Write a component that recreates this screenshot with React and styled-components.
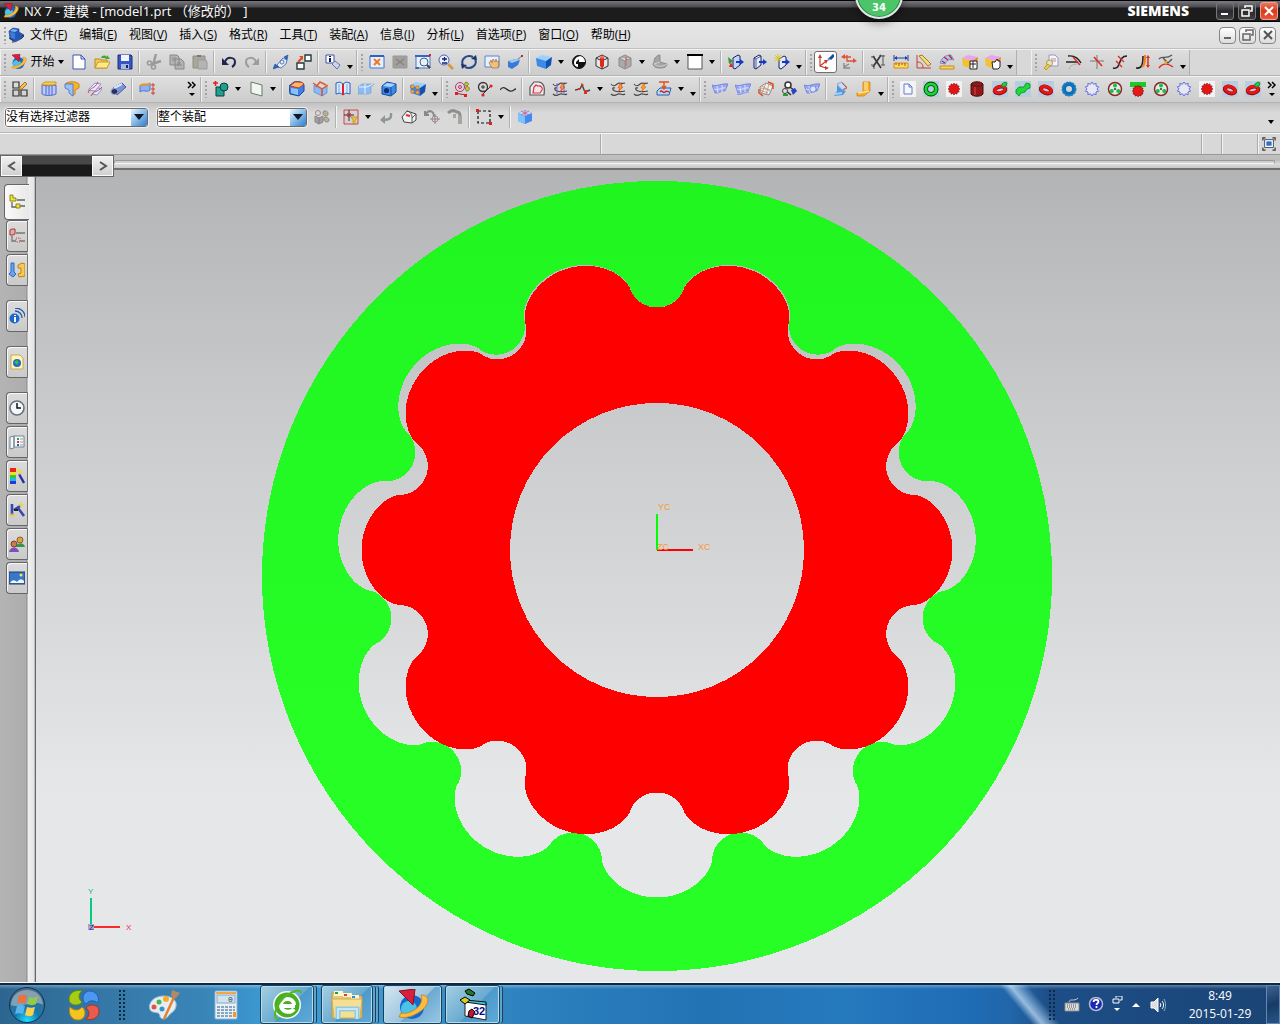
import React from "react";
import styled, { createGlobalStyle, css } from "styled-components";

const GlobalStyle = createGlobalStyle`
  * { box-sizing: border-box; }
  body { margin: 0; background: #b0b0b0; }
  button, select { font: inherit; color: inherit; }
`;

const uiFont = `"Open Sans", "Noto Sans CJK SC", sans-serif`;

const Window = styled.div`
  display: flex;
  flex-direction: column;
  height: 100vh;
  overflow: hidden;
  font-family: ${uiFont};
  font-size: 12px;
  line-height: 16px;
  color: #000;
`;

const PlainButton = styled.button`
  display: flex;
  align-items: center;
  justify-content: center;
  padding: 0;
  border: 0;
  background: none;
`;

/* ---------- title bar ---------- */

const TitleBar = styled.header`
  position: relative;
  display: flex;
  align-items: center;
  flex: none;
  height: 22px;
  padding: 0 2px 0 3px;
  border-top: 1px solid #000;
  border-bottom: 1px solid #000;
  background: linear-gradient(#77767c 0, #4b4a50 6px, #1c1c1c 7px, #1c1c1c 100%);
  color: #fff;
`;

const Title = styled.h1`
  flex: 1;
  margin: 0 0 0 5px;
  font-size: 13px;
  font-weight: 400;
  white-space: pre;
`;

const Brand = styled.span`
  margin-right: 27px;
  font-size: 14px;
  font-weight: 800;
`;

const WindowButtons = styled.div`
  display: flex;
  gap: ${(p) => (p.$mdi ? 3 : 4)}px;
`;

const WindowButton = styled(PlainButton)`
  width: 18px;
  height: 18px;
  border: 1px solid ${(p) => (p.$close ? "#f0a090" : "#77777c")};
  border-radius: 3px;
  background: ${(p) =>
    p.$close
      ? "linear-gradient(#e8785c, #d83a1c 50%, #e8583a)"
      : "linear-gradient(#6c6b70, #2a2a2c 50%, #3c3c3e)"};
`;

const MdiButton = styled(PlainButton)`
  width: 17px;
  height: 17px;
  border: 1px solid #858585;
  border-radius: 4px;
  background: linear-gradient(#fff, #dcdcdc);
`;

const Badge = styled.div`
  position: absolute;
  z-index: 2;
  top: -30px;
  left: calc(68.75% - 25px);
  width: 48px;
  height: 48px;
  padding-top: 27px;
  border: 2px solid #e4e4e4;
  border-radius: 50%;
  background: #4cc468;
  box-shadow: 0 4px 8px rgba(0, 0, 0, 0.4), inset 0 0 0 1px #2c8a50;
  font: 700 10px/16px "DejaVu Sans", sans-serif;
  text-align: center;
`;

/* ---------- menus and tool bars ---------- */

const MenuBar = styled.nav`
  display: flex;
  align-items: center;
  flex: none;
  height: 27px;
  padding: 0 4px 0 0;
  border-bottom: 1px solid #c0c0c0;
  background: linear-gradient(#e6e6e6, #dedede);
`;

const MenuList = styled.div`
  display: flex;
  flex: 1;
  gap: 12px;
  margin-left: 6px;
  white-space: nowrap;
`;

const Grip = styled.span`
  flex: none;
  width: 8px;
  height: 18px;
  background: radial-gradient(circle, #a4a4a4 1px, transparent 1px) 3px 0 / 4px 4px repeat-y;
`;

const ToolRow = styled.div`
  display: flex;
  flex: none;
  height: 27px;
  border-top: 1px solid #f2f2f2;
  border-bottom: 1px solid #b4b4b4;
  background: #d8d8d8;
`;

const ToolGroup = styled.div`
  display: flex;
  align-items: center;
  flex: none;
  margin-left: ${(p) => p.$gap || 0}px;
  padding-bottom: 2px;
  border-right: 1px solid #b0b0b0;
  background: linear-gradient(#dedede, #cccccc);
  box-shadow: inset 1px 0 #f0f0f0;
`;

const ToolButton = styled(PlainButton)`
  flex: none;
  width: 23px;
  height: 22px;
  ${(p) =>
    p.$active &&
    css`
      border: 1px solid #6f6f6f;
      border-radius: 3px;
      background: #fff;
    `}
`;

const StartButton = styled(PlainButton)`
  width: 59px;
  height: 22px;
  gap: 3px;
`;

const Divider = styled.span`
  flex: none;
  width: 2px;
  height: 22px;
  margin: 0 2px;
  border-left: 1px solid #b2b2b2;
  background: #f4f4f4;
`;

const DropButton = styled(PlainButton)`
  flex: none;
  width: 12px;
  height: 22px;
  padding-top: ${(p) => (p.$low ? 10 : 0)}px;
`;

const MoreButton = styled(PlainButton)`
  width: 16px;
  height: 22px;
  margin-left: ${(p) => p.$space || 0}px;
`;

const SelectionBar = styled.div`
  display: flex;
  align-items: center;
  flex: none;
  height: 30px;
  padding: 0 3px 1px 5px;
  border-bottom: 1px solid #b8b8b8;
  background: linear-gradient(#c2c2c2, #d9d9d9 10px);
`;

const FilterBox = styled.div`
  display: flex;
  flex: none;
  align-items: center;
  width: ${(p) => p.$width}px;
  height: 19px;
  margin-right: ${(p) => p.$after}px;
  border: 1px solid #6a6a6a;
  border-radius: 3px;
  background: #fff;
  box-shadow: 0 0 0 1px #ececec;
  overflow: hidden;
`;

const Filter = styled.select`
  flex: 1;
  align-self: stretch;
  min-width: 0;
  padding: 0;
  border: 0;
  outline: 0;
  appearance: none;
  background: #fff;
  font-size: 12px;
  line-height: 16px;
`;

const FilterArrow = styled.span`
  display: flex;
  align-items: center;
  justify-content: center;
  width: 16px;
  align-self: stretch;
  background: linear-gradient(135deg, #ecf6fd, #8fc1ec 45%, #2f7dcc);
  pointer-events: none;
`;

const Spacer = styled.span`
  flex: 1;
`;

const StatusBar = styled.div`
  display: flex;
  flex: none;
  height: 22px;
  border-top: 1px solid #f6f6f6;
  border-bottom: 1px solid #999;
  background: #d8d8d8;
`;

const StatusCell = styled.div`
  display: flex;
  align-items: center;
  justify-content: center;
  flex: ${(p) => p.$flex || "none"};
  width: ${(p) => (p.$width ? `${p.$width}px` : "auto")};
  border-right: 1px solid ${(p) => (p.$last ? "transparent" : "#aaa")};
  box-shadow: ${(p) => (p.$last ? "none" : "1px 0 #f2f2f2")};
`;

const CueRow = styled.div`
  position: relative;
  z-index: 1;
  flex: none;
  height: 15px;
  padding: 5px 5px 0 114px;
  border-bottom: 2px solid #707070;
  background: linear-gradient(#c0c0c0, #bcbcbc 5px, #dcdcdc 9px, #c8c8c8);
`;

const Groove = styled.div`
  height: 4px;
  border: 1px solid #999;
  border-bottom-color: #f4f4f4;
  border-radius: 2px;
  background: #d0d0d0;
`;

const PageStrip = styled.div`
  position: absolute;
  top: 0;
  left: 0;
  display: flex;
  width: 114px;
  height: 22px;
  border: 1px solid #666;
  background: linear-gradient(#48484a 8px, #1a1a1a 9px);
`;

const PageButton = styled(PlainButton)`
  width: 21px;
  background: linear-gradient(#f2f2f2, #cfcfcf);
  box-shadow: inset 0 0 0 1px #fafafa;
  & + & { margin-left: auto; }
`;

/* ---------- work area ---------- */

const WorkArea = styled.main`
  display: flex;
  flex: 1;
  min-height: 0;
  border-bottom: 1px solid #f8f8f8;
`;

const ResourceBar = styled.aside`
  display: flex;
  flex-direction: column;
  align-items: flex-end;
  gap: 2px;
  flex: none;
  width: 36px;
  padding: 14px 0 0 4px;
  border-right: 1px solid #666;
  background: linear-gradient(90deg, #b4b4b4, #adadad 26px, #888 27px, #f0f0f0 28px, #e4e4e4 34px, #999 35px);
`;

const ResourceTab = styled(PlainButton)`
  flex: none;
  width: ${(p) => (p.$active ? 25 : 22)}px;
  height: ${(p) => (p.$active ? 36 : 32)}px;
  margin: ${(p) => p.$space || 0}px ${(p) => (p.$active ? 6 : 7)}px 0 0;
  border: 1px solid #666;
  border-right: ${(p) => (p.$active ? "0" : "1px solid #777")};
  border-radius: 4px 0 0 4px;
  background: ${(p) =>
    p.$active ? "linear-gradient(90deg, #fafafa, #e8e8e8)" : "linear-gradient(#dcdcdc, #cacaca)"};
  box-shadow: inset 1px 1px #f8f8f8;
`;

const Viewport = styled.section`
  position: relative;
  flex: 1;
  min-width: 0;
  background: linear-gradient(#b3b4b6 0%, #cbccce 32%, #dadbdd 58%, #e6e7e9 77%);
`;

const Model = styled.svg`
  display: block;
  width: 100%;
  height: 100%;
`;

const Triad = styled.svg`
  position: absolute;
  left: 46px;
  bottom: 46px;
`;

/* ---------- task bar ---------- */

const TaskBar = styled.footer`
  display: flex;
  align-items: stretch;
  flex: none;
  height: 41px;
  border-top: 2px solid #0c2a48;
  background:
    linear-gradient(rgba(255, 255, 255, 0.3), rgba(255, 255, 255, 0) 4px),
    linear-gradient(50deg, transparent 78.6%, rgba(190, 220, 245, 0.75) 79.4%, transparent 80.8%),
    linear-gradient(90deg, #2c6690 0, #3577a6 8%, #3985b8 16%, #3c9bd4 21%, #3f97ce 30%, #2c80bd 42%, #2273b4 55%, #2579bd 66%, #1f6cb5 76%, #2166a8 79%, #1d4e87 82%, #1a4475 100%);
  color: #fff;
`;

const TaskLaunch = styled(PlainButton)`
  width: ${(p) => p.$width}px;
  margin-right: ${(p) => p.$after || 0}px;
`;

const TaskButton = styled(PlainButton)`
  width: ${(p) => p.$width}px;
  margin-right: ${(p) => p.$after}px;
  border: 1px solid #19405f;
  border-radius: 3px;
  background: ${(p) =>
    p.$active
      ? "linear-gradient(135deg, #d5e7f2, #9cc4de 55%, #6ba9d2 56%, #98c8e4)"
      : "linear-gradient(135deg, #a5cfe4, #68aacf 55%, #4c9acb 56%, #60aada)"};
  box-shadow: inset 0 0 0 1px #b8dbea${(p) =>
    p.$stack > 0 ? ", 3px 0 0 -1px #60a4cb, 4px 0 0 -1px #19405f" : ""}${(p) =>
    p.$stack > 1 ? ", 6px 0 0 -1px #60a4cb, 7px 0 0 -1px #19405f" : ""};
`;

const BandGrip = styled.span`
  flex: none;
  align-self: stretch;
  width: 8px;
  margin: 4px 0;
  background: radial-gradient(circle, #0f2b44 1px, transparent 1px) 0 0 / 4px 4px;
`;

const Tray = styled.div`
  display: flex;
  align-items: center;
  margin-left: auto;
`;

const TrayButton = styled(PlainButton)`
  width: ${(p) => p.$width}px;
  height: 28px;
`;

const Clock = styled.time`
  width: 92px;
  font-size: 12px;
  line-height: 18px;
  text-align: center;
`;

const ShowDesktop = styled(PlainButton)`
  align-self: stretch;
  width: 14px;
  border: 1px solid #6287b0;
  background: linear-gradient(160deg, #3e6490, #173b66 50%, #2a5488);
`;

/* ---------- icons ---------- */

const Svg = ({ children, size = 16, box = 16 }) => (
  <svg width={size} height={size} viewBox={`0 0 ${box} ${box}`} fill="none" strokeWidth="1" aria-hidden="true">
    {children}
  </svg>
);

const P = ({ d, f = "none", s, w }) => <path d={d} fill={f} stroke={s} strokeWidth={w} />;

const Cube = ({ a = "#9cd0ff", b = "#3b8ae8", c = "#1450b0" }) => (
  <>
    <P d="M0 4 6 1l10 2-6 4z" f={a} />
    <P d="M0 4l10 3v8l-9-3z" f={b} />
    <P d="M10 7l6-4-1 8-5 4z" f={c} />
  </>
);

const WireCube = ({ line = "#333", fill = "#e6e6e6" }) => (
  <P d="M8 1l6 3v8l-6 3-6-3V4zM2 4l6 3 6-3M8 7v8" f={fill} s={line} />
);

const Orb = () => (
  <>
    <circle cx="7.5" cy="9" r="6" fill="#1668cc" />
    <circle cx="6" cy="10" r="4" fill="#49c4e8" />
    <P d="M12 3c5 0 4 5 0 8-3 2-7 4-11 3l1-2c4 1 12-3 10-9z" f="#f9bd45" s="#c87c10" w=".4" />
    <P d="M1 1l8-1-1 8z" f="#d8203c" s="#8a1020" w=".5" />
  </>
);

const Curves = ({ accent = "#e83020", color = "#444" }) => (
  <>
    <P d="M1 3c3 4 5 0 8-1 2 0 3 1 6 0M5 7c-3-1-3 2 0 3s5 1 10 0M1 13c3 3 5 1 7 0s5 2 7 0" s={color} w="1.2" />
    <P d="M10 3L8 7h2l-2 4 5-5h-2l1-3z" f="#f8a81c" s={accent} w=".6" />
  </>
);

const Surface = ({ accent }) => (
  <>
    <P d="M0 4c5 2 10-2 16-1l-3 7c-4-1-6 3-10 2z" f="#97a7f2" s="#6373e0" w=".7" />
    <P d="M5 5l1 7M10 4v7M2 8c4 2 8-2 12-1" s="#dfe5ff" />
    {accent && <P d="M2 13c3 2 7-2 12-2" s={accent} />}
  </>
);

const Ring = ({ node }) => (
  <>
    <rect width="16" height="16" fill="#b7cde0" />
    <g transform={node ? "rotate(-12 8 9)" : "rotate(20 8 9)"}>
      <ellipse cx="8" cy="9" rx="5.5" ry="3.2" stroke="#8c0808" strokeWidth="3.8" />
      <ellipse cx="8" cy="8.6" rx="5.4" ry="3" stroke="#ee1414" strokeWidth="2.8" />
    </g>
    {node && <P d="M10 3l3-2 2 1-1 3-3 1-1-1z" f="#22cc44" s="#149030" />}
  </>
);

const spikes = (n, r1, r2) =>
  Array.from({ length: n * 2 }, (_, i) => {
    const r = i % 2 ? r1 : r2;
    const t = (i * Math.PI) / n;
    return `${8 + r * Math.sin(t)},${8 - r * Math.cos(t)}`;
  }).join(" ");

const icons = {
  nx: <Orb />,
  part: (
    <>
      <P d="M1 4l4-3 6 1v3l5 3-3 4-6 3-5-3z" f="#2458b8" s="#163a80" w=".6" />
      <P d="M2 4l3-2 5 1-3 2z" f="#7fb4f4" />
      <P d="M2 5l5 1v6l-4-1z" f="#3e7cdc" />
      <P d="M1 11l4 2v3M14 8l2 1-3 3" s="#334" />
    </>
  ),
  new: <P d="M2 1h8l4 4v10H2zM10 1v4h4" f="#fff" s="#4055b8" />,
  open: (
    <>
      <P d="M1 5h5l1 1h6v8H1z" f="#f4cc4e" s="#b98a18" />
      <P d="M1 14L4 8h12l-3 6z" f="#ffe78a" s="#c89a28" />
      <P d="M7 4c1-3 4-3 6-1V1l3 4h-5l1-1" f="#45a82c" />
    </>
  ),
  save: (
    <>
      <P d="M1 1h13l1 1v13H1z" f="#3558c0" s="#1b2c80" />
      <P d="M4 1h8v6H4z" f="#f1f4fc" />
      <P d="M4 10h8v5H4z" f="#a8b6e4" />
      <P d="M9 11h2v3H9z" f="#15245c" />
    </>
  ),
  cut: (
    <>
      <P d="M15 7L6 10M10 0L7 11" s="#9a9a9a" w="2.4" />
      <circle cx="3.5" cy="9" r="2" stroke="#9a9a9a" strokeWidth="1.6" />
      <circle cx="7.5" cy="13" r="2" stroke="#9a9a9a" strokeWidth="1.6" />
    </>
  ),
  copy: <P d="M1 1h7l2 2v8H1zM6 5h6l3 3v7H6zM3 4h4M3 6h3M8 9h4M8 11h5" f="#b4b4b4" s="#888" />,
  paste: (
    <>
      <P d="M1 2h12v12H1z" f="#aaa69c" s="#8e8c84" />
      <P d="M5 1h4v2H5z" f="#777" />
      <P d="M6 6h8l1 2v7H6z" f="#b4b4b4" s="#999" />
    </>
  ),
  undo: (
    <>
      <P d="M4 8c2-6 10-5 10 0 0 3-1 4-3 5" s="#1c2450" w="2" />
      <P d="M1 4v7h7z" f="#1c2450" />
    </>
  ),
  redo: (
    <>
      <P d="M12 8C10 2 2 3 2 8c0 3 1 4 3 5" s="#9c9c9c" w="2" />
      <P d="M15 4v7H8z" f="#9c9c9c" />
    </>
  ),
  pens: (
    <>
      <P d="M4 11l6-7 4 2-1 4-5 4-3-1z" f="#e4ecfa" s="#5c7cb8" />
      <P d="M11 3l4-2-1 5zM0 15l2-5 4 3z" f="#2864c4" s="#23509c" w=".6" />
      <circle cx="9" cy="8" r="2" stroke="#5c7cb8" />
    </>
  ),
  swap: (
    <>
      <P d="M9 1h6v6H9zM1 9h7v6H1z" f="#fff" s="#24383c" w="1.4" />
      <P d="M2 8l4-4" s="#e04818" w="2" />
      <P d="M3 2h4v4z" f="#e04818" />
    </>
  ),
  info: (
    <>
      <P d="M1 1h8v8H1z" f="#fff" s="#4050a0" />
      <P d="M4 2h2v1H4zM4 4h2v4H4z" f="#101860" />
      <P d="M7 10l3-3 5 4-3 4z" f="#c9d6ee" s="#6876a8" />
    </>
  ),
  fit: (
    <>
      <P d="M1 2h14v12H1z" f="#e7f0ff" s="#3a6cd0" />
      <P d="M1 1h14v2H1z" f="#2e60c8" />
      <P d="M5 5l6 6M11 5l-6 6" s="#f07820" w="2" />
      <P d="M1 14h14" s="#88aef0" />
    </>
  ),
  fitGray: (
    <>
      <P d="M1 2h14v12H1z" f="#a0a0a0" s="#999" />
      <P d="M4 5l8 6M12 5l-8 6" s="#8a8478" w="1.5" />
    </>
  ),
  zoomBox: (
    <>
      <P d="M1 2h14v12H1z" f="#e8f0fc" s="#4c78c4" />
      <P d="M0 1h15v2H0zM1 13h3v2H0z" f="#3566c4" />
      <circle cx="9" cy="8" r="4" fill="#dff4f4" stroke="#558" />
      <P d="M12 11l3 3" s="#345" w="2" />
      <P d="M14 0h2v2h-2z" f="#e02020" />
    </>
  ),
  zoom: (
    <>
      <circle cx="6" cy="6" r="5" fill="#eaf2ff" stroke="#4861b8" />
      <P d="M4 5h5M6.5 3v4M4 9h5" s="#102080" w="1.3" />
      <P d="M10 10l5 5" s="#d8983a" w="2.5" />
    </>
  ),
  rotate: (
    <>
      <P d="M2 11C-1 5 6 0 12 3M14 5c3 6-4 11-10 8" s="#2a4888" w="2" />
      <P d="M10 5l6 1-1-5zM6 11l-6-1 1 5z" f="#1c3470" />
    </>
  ),
  pan: (
    <>
      <P d="M1 2h14v11H1z" f="#e8f0ff" s="#5c82c8" />
      <P d="M5 9l2-3 1 3 1-4 2 3 1-3 1 3 2-1-1 7H8z" f="#f0c07c" s="#a0703c" w=".7" />
    </>
  ),
  perspective: (
    <>
      <P d="M1 7l8-2 4 1-2 5-6 4-4-2z" f="#3978d4" />
      <P d="M1 7l8-2 4 1-8 3z" f="#9cc8f4" />
      <P d="M11 5l4-3" s="#6674a4" />
      <P d="M14 1h2v2h-2z" f="#d42020" />
    </>
  ),
  cube: <Cube />,
  contrast: (
    <>
      <circle cx="8" cy="8" r="6.5" fill="#111" stroke="#111" />
      <P d="M9 2c4 1 5 4 5 6H8V5L5 8v2h2v3c-2 0-4-2-4-4 0-4 2-6 6-7z" f="#fff" />
      <circle cx="11" cy="11" r="2" fill="#111" />
    </>
  ),
  redCube: (
    <>
      <WireCube />
      <P d="M6 4h4v8l-2 2-2-2z" f="#e02818" />
      <P d="M5 3l3-1 3 1-3 2z" f="#f06858" />
    </>
  ),
  grayCube: (
    <>
      <WireCube line="#8c8c8c" fill="#aaa" />
      <P d="M8 3h2v9H8z" f="#b88484" />
    </>
  ),
  section: (
    <>
      <P d="M2 8c0-4 3-7 6-7v7l7 2c0 3-3 4-7 4-5 0-7-2-7-4z" f="#a4a4a4" s="#808080" w=".8" />
      <P d="M8 8l-6 2c3 3 9 3 13 0" s="#d0d0d0" />
    </>
  ),
  white: (
    <>
      <P d="M1 1h14v14H1z" f="#fff" s="#555" />
      <P d="M0 1h16" s="#000" w="2" />
    </>
  ),
  planeIn: (
    <>
      <P d="M5 4l5-3 2 1v9l-5 4-2-1z" f="#c6d6fa" s="#152064" />
      <P d="M0 3l5 4-4 3z" f="#2a9c30" />
      <P d="M3 8l2 5H1z" f="#e02818" />
      <P d="M8 8h5" s="#1438c4" w="2" />
      <P d="M12 5l4 3-4 3z" f="#1438c4" />
    </>
  ),
  planeOut: (
    <>
      <P d="M3 4l5-3 2 1v9l-5 4-2-1z" f="#e2eafc" s="#152064" />
      <P d="M3 4l2 1v9M5 5l5-3" s="#152064" w=".7" />
      <P d="M8 8h5" s="#1438c4" w="2" />
      <P d="M12 5l4 3-4 3z" f="#1438c4" />
    </>
  ),
  planeNew: (
    <>
      <P d="M5 5l5-3 2 1v8l-5 4-2-1z" f="#e2eafc" s="#152064" />
      <P d="M8 8h5" s="#1438c4" w="2" />
      <P d="M12 5l4 3-4 3z" f="#1438c4" />
      <P d="M4 0v8M0 4h8M1 1l6 6M7 1L1 7" s="#dccb20" />
    </>
  ),
  wcs: (
    <>
      <P d="M2 3v9l6 2M2 12l5-4" s="#c83828" w="1.2" />
      <P d="M0 4l2-4 2 4zM7 12l4 2-4 2zM6 6l4 0-2 4z" f="#c83828" />
      <P d="M10 6l2-2" s="#5a88d8" w="2" />
      <P d="M12 5l4-4" s="#1c48a4" w="3" />
    </>
  ),
  wcsMove: (
    <>
      <P d="M3 3h7M6 1v6h8" s="#e05030" w="1.4" />
      <P d="M4 0L0 3l4 2zM12 4l4 3-4 2z" f="#e05030" />
      <P d="M3 9v5h6M3 13l5-3" s="#888" w="1.4" />
    </>
  ),
  trimX: (
    <>
      <P d="M3 2l8 12M11 1L3 13" s="#333" w="1.6" />
      <P d="M1 3h4M9 2h6M13 1v10M4 11v4M11 11h4M1 11h4" s="#555" />
    </>
  ),
  ruler: (
    <>
      <P d="M1 1v6M15 1v6M2 4h12" s="#2040a0" />
      <P d="M1 4l3-2v4zM15 4l-3-2v4z" f="#2040a0" />
      <P d="M1 9h14v5H1z" f="#ffdd54" s="#d8882c" />
      <P d="M3 9v2M6 9v3M9 9v2M12 9v3" s="#a05010" />
    </>
  ),
  angle: (
    <>
      <P d="M1 1v13h14M1 8c4 0 6 2 6 6" s="#c43c34" />
      <P d="M3 2l3-1 9 9-3 2z" f="#f6dc78" s="#a87a28" />
    </>
  ),
  measure: (
    <>
      <P d="M1 9c2-6 6-8 11-8l3 5c-5-1-7 0-9 4z" f="#aac8f4" s="#4c72c8" w=".7" />
      <P d="M3 7l3 2M5 3l4 3M10 1l3 4" s="#d42828" w="1.4" />
      <P d="M1 12h14v3H1z" f="#f8d45c" s="#c48a20" />
    </>
  ),
  boxA: (
    <>
      <Cube a="#e8a4f0" b="#f4c034" c="#f08428" />
      <P d="M8 7h7v8H8zM8 10h6M11 7v7" f="#fff" s="#222" />
    </>
  ),
  boxB: (
    <>
      <Cube a="#e8a4f0" b="#f4c034" c="#f08428" />
      <P d="M7 8h3l2-3 1 2h2v6l-2 2H8z" f="#fff" s="#222" />
    </>
  ),
  keyDoc: (
    <>
      <P d="M6 1h6l3 3v8H6z" f="#f4f4fc" s="#9898c0" />
      <P d="M8 5h5M8 7h5" s="#c88" />
      <circle cx="6.5" cy="9" r="3" fill="#e9e4b0" stroke="#98a060" />
      <P d="M1 14l4-4 2 2-4 4z" f="#f2cc38" s="#a88820" w=".7" />
    </>
  ),
  trimCurve: (
    <>
      <P d="M2 2c8-1 11 4 13 7M0 8h12" s="#222" w="1.4" />
      <P d="M7 3l7 8" s="#e02c20" w="1.4" />
      <P d="M3 15c1-4 5-5 9-5" s="#aaa" />
    </>
  ),
  trimCross: (
    <>
      <P d="M8 1v14M1 7h14" s="#777" />
      <P d="M5 3l8 9" s="#e02c20" w="1.6" />
    </>
  ),
  bridge: (
    <>
      <P d="M1 14c9 2 4-12 14-12" s="#222" w="1.6" />
      <P d="M6 2l6 6M4 7l6 6" s="#e02c20" w="1.4" />
    </>
  ),
  offset: (
    <>
      <P d="M1 14c6 1 7-4 7-12" s="#222" w="1.6" />
      <P d="M7 13c3-2 3-6 3-12" s="#f08020" w="2" />
      <P d="M13 3v9" s="#e02c20" w="1.5" />
      <P d="M11 4l2-3 2 3zM11 11l2 3 2-3z" f="#e02c20" />
    </>
  ),
  project: (
    <>
      <P d="M1 5c3-4 6 1 13-4M5 4l5 5 4-4" s="#555" w="1.4" />
      <P d="M1 14c4-6 10-4 14-1" s="#e02c20" w="1.4" />
      <P d="M6 7h4l-2 4z" f="#f0a020" />
    </>
  ),
  sketch: (
    <>
      <P d="M1 1h6v6H1zM1 9h6v6H1zM9 9h6v6H9z" s="#333" w="1.2" />
      <P d="M7 9l1-3 5-5 2 2-5 5z" f="#f8c13c" s="#8c5828" w=".8" />
    </>
  ),
  extrude: (
    <>
      <P d="M1 4c3 1 10 1 14 0v9c-4 2-11 2-14 0z" f="#b9c8f8" s="#5068c8" />
      <P d="M1 3l3-2h11v2l-3 1H1z" f="#f8d055" s="#c69a26" />
      <P d="M5 5v9M8 5v9M11 5v9" s="#5068c8" />
    </>
  ),
  revolve: (
    <>
      <P d="M1 3c3-3 11-3 14 0v4l-4 2v4l-3 2V3z" f="#f4b42c" s="#d08818" />
      <P d="M1 3h8v12l-4-3V9L1 7z" f="#9cc0f8" s="#5a80d4" />
    </>
  ),
  hole: (
    <>
      <P d="M1 9l7-7 6 1-6 7zM5 13l6-6 4 1-5 6z" f="#e6eafc" s="#8a96d8" />
      <P d="M1 12c3-7 6-3 10-11M4 15c3-6 6-3 11-9" s="#d04848" />
    </>
  ),
  tube: (
    <>
      <P d="M3 7l9-5 4 4-9 8z" f="#7d90d8" s="#4b5aa8" />
      <P d="M4 7l8-4" s="#dce4ff" w="2" />
      <ellipse cx="4.5" cy="10.5" rx="3.5" ry="3" fill="#28345c" stroke="#9ca8dc" />
    </>
  ),
  sweep: (
    <>
      <P d="M1 5c4-4 7 1 10-3v7c-4 3-6-1-10 2z" f="#88b4f4" s="#4c74cc" />
      <P d="M1 5c4-4 7 1 10-3" s="#f09020" w="2" />
      <P d="M14 2v12M12 4h4M12 8h4M12 12h4" s="#d44030" />
    </>
  ),
  shape: (
    <>
      <P d="M3 6h8v9H3z" f="#20a090" s="#103c38" />
      <circle cx="11" cy="6" r="4" fill="#20a090" stroke="#103c38" />
      <P d="M0 2h5M2.5 0v5" s="#e02020" w="1.5" />
    </>
  ),
  plane: <P d="M3 1l11 3v11L3 12z" f="#f0f8ee" s="#677" />,
  block: (
    <>
      <P d="M0 5l5-4c5-1 9 0 10 3v6l-5 5-9-2z" f="#3b82e8" s="#164a9c" />
      <P d="M1 5l5-4c4 0 8 0 9 2l-5 4z" f="#f8bd5c" s="#d8302c" />
      <P d="M2 7l7 1v6l-7-2z" f="#8cc0f8" />
    </>
  ),
  sheet: (
    <>
      <P d="M2 4l8 4v7l-8-4zM10 8l5-3v7l-5 3z" f="#8cb8f8" s="#5484cc" w=".7" />
      <P d="M1 2l9 6 6-4M10 8v7M4 6l4-5 6 3" s="#e05828" w="1.4" />
    </>
  ),
  book: (
    <>
      <P d="M1 2l4-1 3 2 3-2 4 1v11l-4-1-3 2-3-2-4 1z" f="#dceafe" s="#2f62bc" />
      <P d="M4 3v9M12 3v9" s="#7ea8ec" />
      <P d="M7 3h2v11H7z" f="#d82424" />
    </>
  ),
  slab: (
    <>
      <P d="M0 6l4-3h12l-3 3v6l-3 1H0z" f="#8cbcf0" s="#7799cc" w=".6" />
      <P d="M1 6h8l6-3M7 3v10" s="#e7f4ff" />
    </>
  ),
  holeCube: (
    <>
      <P d="M1 5l5-4 9 2v8l-5 4-9-2z" f="#3b8ae8" s="#18489c" />
      <P d="M2 5l4-3 8 1-4 3z" f="#a8d4ff" />
      <P d="M10 6v8" s="#18489c" />
      <circle cx="5.5" cy="9.5" r="2.6" fill="#0f2f74" />
    </>
  ),
  pattern: (
    <>
      <Cube />
      <P d="M1 4h3v3H1zM6 5h3v3H6zM1 9h3v3H1zM6 10h3v3H6z" f="#f8b040" s="#c06420" w=".6" />
    </>
  ),
  gearLink: (
    <>
      <circle cx="6" cy="6" r="4.5" stroke="#b43084" />
      <circle cx="6" cy="6" r="1.5" stroke="#c03050" />
      <P d="M12 1c4 1 2 4 0 4s-2-3 0-4zM13 5c4 2 2 5 0 5s-2-4 0-5z" f="#c8c048" s="#848030" />
      <P d="M2 12l4 1 6 1" s="#b42020" />
      <P d="M1 11h3v3H1zM10 13h3v3h-3z" f="#e02020" />
    </>
  ),
  circlePt: (
    <>
      <circle cx="6" cy="6" r="4.5" stroke="#333" strokeWidth="1.3" />
      <P d="M4 6h4M6 4v4M5 14l9-9" s="#333" />
      <circle cx="6" cy="14" r="1.6" fill="#e02020" />
      <circle cx="14" cy="5" r="1.6" fill="#e02020" />
    </>
  ),
  wave: <P d="M0 9c4-6 7 1 10 1 3 1 4-2 6-2" s="#333" w="1.3" />,
  profile: (
    <>
      <P d="M5 1h5c5 1 6 5 5 13H1V6z" f="#eee" s="#555" w="1.2" />
      <P d="M5 6l2-2 2 1c3-1 5 2 4 4l-2 3H4z" f="#f6e4e4" s="#d8304c" w="1.2" />
    </>
  ),
  curvesA: (
    <>
      <Curves />
      <P d="M5 2v11M12 3v11" s="#7c60d0" />
    </>
  ),
  points: (
    <>
      <P d="M0 9l5-1 2-4 3 7 5-2" s="#444" w="1.4" />
      <P d="M6 2l3 2-2 2zM9 9h3v4H9zM3 7h2v2H3z" f="#e03020" />
    </>
  ),
  curves: <Curves />,
  curvesB: <Curves accent="#e86020" />,
  drop: (
    <>
      <P d="M1 10l3-3h11l-2 7H1z" f="#b8dcf8" s="#245cac" />
      <P d="M4 11c2-3 3 2 5 0s3 0 4 0" s="#d82020" w="1.4" />
      <P d="M8 1v7M3 1h10M6 5l2 3 2-3" s="#e05020" w="1.4" />
    </>
  ),
  surface: <Surface />,
  surfaceB: <Surface accent="#7c90f0" />,
  mesh: (
    <>
      <P d="M2 6l6-4 7 3-4 9-8-2z" f="#f4f0ea" s="#666" w=".7" />
      <P d="M4 5l8 5M2 9l8 3M8 2l-4 10M11 3l-3 11M3 7l9 2" s="#b89080" w=".8" />
      <P d="M10 1l5 2v5M1 8v4l4 3" s="#e04820" w="1.4" />
    </>
  ),
  nodes: (
    <>
      <P d="M6 4l7 5M4 9l6 5" s="#333" w="1.5" />
      <circle cx="7" cy="4" r="3" fill="#fff" stroke="#333" strokeWidth="1.5" />
      <circle cx="4" cy="10" r="2.5" fill="#ddd" stroke="#444" />
      <P d="M10 9l4-2 2 3-4 4z" f="#2644c4" />
      <P d="M2 13h5v2H2z" f="#24a030" />
    </>
  ),
  surfRing: (
    <>
      <Surface />
      <circle cx="9" cy="8" r="3.2" fill="#dbe4ff" stroke="#6c84dc" />
    </>
  ),
  fold: (
    <>
      <P d="M4 3l5-2 5 5-5 3z" f="#c8dcf4" s="#6c94c4" w=".7" />
      <P d="M4 4l5 5 4 1-3 4-9 1 3-5z" f="#4e97e4" />
      <P d="M2 13l7-1" s="#a5d0f8" w="2" />
      <P d="M9 2l5 5-4 2" s="#e05030" />
    </>
  ),
  lshape: (
    <>
      <P d="M7 1h7v9l-6 5H1v-3l6-1z" f="#f8ac28" s="#d07c10" w=".7" />
      <P d="M8 1h4v8H8z" f="#fcd068" />
      <P d="M2 12l6-1 5-1" s="#ffe498" w="1.4" />
    </>
  ),
  pageBlue: (
    <>
      <rect width="16" height="16" fill="#f3f3f3" />
      <P d="M4 3h5l3 3v7H4zM9 3v3h3" f="#f5f7ff" s="#6878cc" />
    </>
  ),
  greenRing: (
    <>
      <rect width="16" height="16" fill="#b4cee0" />
      <circle cx="8" cy="8" r="5.2" stroke="#053c0c" strokeWidth="4.5" />
      <circle cx="8" cy="8" r="5.2" stroke="#10dc30" strokeWidth="2.8" />
    </>
  ),
  burst: (
    <>
      <rect width="16" height="16" fill="#f2f2f2" />
      <polygon points={spikes(12, 4.5, 6)} fill="#e41414" stroke="#801010" strokeWidth=".6" />
    </>
  ),
  barrel: (
    <>
      <P d="M2 3c2-3 10-3 12 0v10c-2 3-10 3-12 0z" f="#931818" s="#4c0c0c" />
      <P d="M2 3c3 3 9 3 12 0" s="#3c2020" />
      <P d="M6 6v8" s="#b83030" w="2" />
    </>
  ),
  ringNode: <Ring node />,
  greenBar: (
    <>
      <rect width="16" height="16" fill="#b4cee0" />
      <P d="M1 9l3-3 5 0 2-4 4 1v4l-3 1-2 3-4 1-2 3-3-3z" f="#20d838" s="#0b8a20" w=".8" />
    </>
  ),
  redRing: <Ring />,
  blueRing: (
    <>
      <circle cx="8" cy="8" r="5" stroke="#0e6fb8" strokeWidth="4" />
      <circle cx="8" cy="8" r="6.5" stroke="#1884cc" strokeWidth="2" strokeDasharray="2 1" />
    </>
  ),
  starRing: <polygon points={spikes(10, 5, 7)} fill="#e8e8f4" stroke="#6670e4" />,
  wheel: (
    <>
      <circle cx="8" cy="8" r="6.5" fill="#e8e8e8" stroke="#882828" strokeWidth="1.5" />
      <circle cx="8" cy="4.5" r="2" fill="#18c040" />
      <circle cx="4.8" cy="10" r="2" fill="#18c040" />
      <circle cx="11.2" cy="10" r="2" fill="#18c040" />
      <circle cx="8" cy="8" r="1" fill="#333" />
    </>
  ),
  rackGear: (
    <>
      <rect y="1" width="16" height="5" fill="#18cc28" />
      <g transform="translate(1 3) scale(.88)">
        <polygon points={spikes(12, 5, 6.5)} fill="#e81818" stroke="#901010" />
      </g>
    </>
  ),
  chainGray: (
    <>
      <P d="M1 7l4 2v6l-4-2zM5 9l4-2v6l-4 2z" f="#a0a0a0" s="#888" />
      <circle cx="4" cy="4" r="2.5" stroke="#a88" />
      <P d="M10 2c5-1 5 5 2 5s-4-4-2-5zM11 8c5 0 5 5 2 5s-4-4-2-5z" f="#b4b19c" s="#8c8878" />
    </>
  ),
  snap: (
    <>
      <P d="M1 1h14v14H1z" f="#d8d0d0" s="#cc4450" />
      <P d="M6 1v11M1 6h10" s="#333" />
      <circle cx="6" cy="6" r="2" stroke="#c04040" />
      <P d="M8 8h7l-3 3v4h-2v-4z" f="#f0c428" s="#a88010" w=".6" />
    </>
  ),
  back: (
    <>
      <P d="M13 4v3c0 3-4 4-8 4" s="#8d9794" w="2.4" />
      <P d="M7 6v9l-5-4z" f="#8d9794" />
    </>
  ),
  house: (
    <>
      <P d="M1 8l5-6 9 3v6l-4 3-8-1z" f="#f2f2f4" s="#444" />
      <P d="M6 2c4 1 5 4 5 7v5M11 9l4-4" s="#555" />
      <P d="M5 6l4 1" s="#d83030" w="2" />
    </>
  ),
  undoPt: (
    <>
      <P d="M2 5c3-5 8-3 8 3M1 2v4h4" s="#888" w="2" />
      <circle cx="11" cy="10" r="3" stroke="#a88" />
      <P d="M11 5v10M6 10h10" s="#888" />
    </>
  ),
  tree: (
    <>
      <P d="M1 4c3-3 6-3 9-1 2 0 3 1 3 4" s="#8f8f8f" w="3" />
      <P d="M11 7h4v8h-4zM6 5h3v4H6z" f="#a3a79e" />
    </>
  ),
  marquee: (
    <>
      <path d="M2 2h12v12H2z" stroke="#111" strokeWidth="1.2" strokeDasharray="3 2" />
      <P d="M0 0h3v3H0zM13 13h3v3h-3z" f="#e02020" />
    </>
  ),
  glassCube: (
    <>
      <P d="M8 1l7 3v8l-7 3-7-3V4z" f="#4488f0" />
      <P d="M8 1l7 3-7 3-7-3z" f="#ccd2f4" />
      <P d="M8 7v8l-7-3V4z" f="#7ac4fc" />
      <P d="M4 2l8 4M12 2L4 6M8 1v7" s="#c05c84" w=".8" />
    </>
  ),
  fullscreen: (
    <>
      <P d="M1 4V1h3M12 1h3v3M15 12v3h-3M4 15H1v-3" s="#333" w="1.3" />
      <P d="M3 3h10v9H3z" f="#fff" s="#345" />
      <P d="M5 5h6v5H5z" f="#2c70c8" />
    </>
  ),
  navAssembly: (
    <>
      <P d="M3 8v5h4M8 6h8M11 12h5" s="#665" w="1.3" />
      <P d="M1 1h3v3h3v3H1zM7 10h4v4H7z" f="#ece834" s="#8c8420" />
    </>
  ),
  navPart: (
    <>
      <P d="M3 8v5h4M7 5h9M11 13h5" s="#776" w="1.3" />
      <P d="M1 2l2-1h3v5l-2 1H1z" f="#e8a8a8" s="#a03838" />
      <path d="M7 10h4v4H7z" stroke="#c05050" strokeDasharray="1 1" />
    </>
  ),
  navTools: (
    <>
      <P d="M2 1h3v9l2 2-3 3-4-3 2-2z" f="#6ba4ec" s="#2c68c0" />
      <P d="M9 3l4-2 3 1v12l-6 1-1-3 3-1V6H9z" f="#f7cc48" s="#b8801c" />
    </>
  ),
  navInfo: (
    <>
      <circle cx="5.5" cy="10.5" r="5" fill="#1c68cc" />
      <P d="M5 7h2v1H5zM5 9h2v5H5z" f="#fff" />
      <P d="M6 3c4 0 7 3 7 7M6 0c6 0 10 4 10 9" s="#2458a8" w="1.3" />
    </>
  ),
  navWeb: (
    <>
      <P d="M2 1h9l3 3v11H2z" f="#fff5b8" s="#c8a858" />
      <circle cx="8" cy="9" r="4" fill="#2668c8" />
      <P d="M5 8l3-2 2 2-2 3z" f="#3cb84c" />
    </>
  ),
  navClock: (
    <>
      <circle cx="8" cy="8" r="7" fill="#f4f8fc" stroke="#66727c" strokeWidth="1.6" />
      <P d="M8 3v5h4" s="#111" w="1.5" />
    </>
  ),
  navDoc: (
    <>
      <P d="M1 3l4-1v12l-4 1zM5 2h10v11H5z" f="#f4f8fa" s="#748494" />
      <P d="M8 4h2v2H8z" f="#30a050" />
      <P d="M8 7h2v2H8z" f="#d83030" />
      <P d="M8 10h2v2H8z" f="#305cc0" />
      <P d="M11 5h3M11 8h3M11 11h3" s="#999" />
    </>
  ),
  navColor: (
    <>
      <P d="M1 0h6v4H1z" f="#e82020" />
      <P d="M1 4h6v3H1z" f="#f0e020" />
      <P d="M1 7h6v3H1z" f="#30c840" />
      <P d="M1 10h6v3H1z" f="#20b8e0" />
      <P d="M1 13h6v3H1z" f="#2838d8" />
      <P d="M10 6l5 9" s="#2434a4" w="2.4" />
      <P d="M10 0v7M7 3h7M8 1l5 5" s="#f0dc30" />
    </>
  ),
  navWand: (
    <>
      <P d="M3 2v11M5 8l6-4M9 6l6 8" s="#3448b0" w="2.6" />
      <P d="M5 8h4" s="#222" w="2" />
      <P d="M12 0v6M9 3h6M0 13h6M3 11v5" s="#ecd034" />
    </>
  ),
  navPeople: (
    <>
      <circle cx="11" cy="4" r="3" fill="#e0a048" stroke="#905c24" />
      <P d="M7 11c1-5 8-5 9 0z" f="#309848" />
      <circle cx="5" cy="8" r="3" fill="#c87c4c" stroke="#7c4030" />
      <P d="M0 16c1-6 9-6 10 0z" f="#7c50bc" />
    </>
  ),
  navScene: (
    <>
      <P d="M0 2h16v12H0z" f="#3878c8" s="#1c3c74" />
      <P d="M1 13c2-4 5-3 7-1 3-4 5-3 7-1v2z" f="#f4f4f4" />
      <circle cx="12" cy="5" r="1.5" fill="#f8e060" />
    </>
  ),
};

const Icon = ({ name, size }) => <Svg size={size}>{icons[name]}</Svg>;

const Down = () => (
  <svg width="6" height="4" viewBox="0 0 6 4" aria-hidden="true">
    <path d="M0 0h6L3 4z" fill="#000" />
  </svg>
);

const Chevron = () => (
  <svg width="10" height="16" viewBox="0 0 10 16" fill="none" aria-hidden="true">
    <path d="M1 1l3 3-3 3M5 1l3 3-3 3" stroke="#000" strokeWidth="1.5" />
    <path d="M2 12h6l-3 3z" fill="#000" />
  </svg>
);

const Glyph = ({ kind, color = "#fff" }) => (
  <svg width="12" height="12" viewBox="0 0 12 12" fill="none" stroke={color} strokeWidth="2" aria-hidden="true">
    {kind === "min" && <path d="M2 9h7" />}
    {kind === "restore" && <path d="M4 3V1h7v5H9M1 5h7v6H1z" strokeWidth="1.5" />}
    {kind === "close" && <path d="M2 2l8 8M10 2l-8 8" />}
  </svg>
);

/* ---------- tool bar contents: "|" divider, "v" drop arrow, "_" tool bar options, "*" pressed ---------- */

const mainGroups = [
  { start: true, items: "new open save | cut copy paste | undo redo | pens swap | info _" },
  {
    items:
      "fit fitGray zoomBox zoom rotate pan perspective | cube v contrast redCube grayCube v section v white v | planeIn planeOut planeNew _",
  },
  { items: "wcs* wcsMove | trimX ruler angle measure boxA boxB _" },
  { gap: 14, items: "keyDoc trimCurve trimCross bridge offset project _" },
];

const featureGroups = [
  { items: "sketch | extrude revolve hole tube | sweep", more: 26 },
  { items: "shape v plane v | block sheet book slab holeCube | pattern _" },
  { items: "gearLink circlePt wave | profile curvesA points v curves curvesB drop v _" },
  { items: "surface surfaceB mesh nodes surfRing | fold lshape _" },
  {
    items:
      "pageBlue greenRing burst barrel ringNode greenBar redRing blueRing starRing wheel rackGear wheel starRing burst redRing ringNode",
    more: 0,
  },
];

const Items = ({ list }) =>
  list.split(" ").map((token, i) => {
    if (token === "|") return <Divider key={i} />;
    if (token === "v" || token === "_")
      return (
        <DropButton key={i} $low={token === "_"} aria-label="选项">
          <Down />
        </DropButton>
      );
    const name = token.replace("*", "");
    return (
      <ToolButton key={i} $active={token !== name} aria-label={name}>
        <Icon name={name} />
      </ToolButton>
    );
  });

const Groups = ({ groups }) => (
  <ToolRow>
    {groups.map((g, i) => (
      <ToolGroup key={i} $gap={g.gap}>
        <Grip />
        {g.start && (
          <StartButton>
            <Icon name="nx" />
            开始
            <Down />
          </StartButton>
        )}
        <Items list={g.items} />
        {g.more !== undefined && (
          <MoreButton $space={g.more} aria-label="更多">
            <Chevron />
          </MoreButton>
        )}
      </ToolGroup>
    ))}
  </ToolRow>
);

const menus = [
  ["文件", "F"], ["编辑", "E"], ["视图", "V"], ["插入", "S"], ["格式", "R"], ["工具", "T"],
  ["装配", "A"], ["信息", "I"], ["分析", "L"], ["首选项", "P"], ["窗口", "O"], ["帮助", "H"],
];

const resources = [
  ["navAssembly", 0], ["navPart", -2], ["navTools", 0], ["navInfo", 12], ["navWeb", 12], ["navClock", 12],
  ["navDoc", 0], ["navColor", 0], ["navWand", 0], ["navPeople", 0], ["navScene", 0],
];

/* Cycloidal profile: lobes roll outside the pitch circle, round valleys join them. */
const ECCENTRICITY = 26;
const LOBE = 17.7;
const VALLEY = ECCENTRICITY - LOBE;
const VALLEY_RADIUS = 29;

function cycloidProfile(cx, cy, teeth) {
  const pitch = ECCENTRICITY * teeth;
  const steps = 40;
  let path = "";
  for (let k = 0; k < teeth; k++) {
    const start = (2 * Math.PI * k) / teeth + (Math.PI * VALLEY) / pitch;
    for (let i = 0; i <= steps; i++) {
      const t = ((2 * Math.PI * LOBE) / pitch) * (i / steps);
      const a = start + t;
      const b = start + t * (1 + pitch / LOBE);
      const x = cx + (pitch + LOBE) * Math.sin(a) - LOBE * Math.sin(b);
      const y = cy - (pitch + LOBE) * Math.cos(a) + LOBE * Math.cos(b);
      const arc = `A${VALLEY_RADIUS} ${VALLEY_RADIUS} 0 0 0 `;
      path += (i > 0 ? "L" : k > 0 ? arc : "M") + `${x.toFixed(2)} ${y.toFixed(2)}`;
    }
  }
  const x0 = cx + pitch * Math.sin((Math.PI * VALLEY) / pitch);
  const y0 = cy - pitch * Math.cos((Math.PI * VALLEY) / pitch);
  return `${path}A${VALLEY_RADIUS} ${VALLEY_RADIUS} 0 0 0 ${x0.toFixed(2)} ${y0.toFixed(2)}Z`;
}

const circle = (cx, cy, r) => `M${cx - r} ${cy}a${r} ${r} 0 1 0 ${2 * r} 0a${r} ${r} 0 1 0 ${-2 * r} 0Z`;

const ringPath = circle(657, 576, 395) + cycloidProfile(657, 576, 11);
const rotorPath = cycloidProfile(657, 550, 10) + circle(657, 550, 147);

const GearModel = () => (
  <Model viewBox="36 170 1244 812" role="img" aria-label="model1">
    <defs>
      <linearGradient id="ring" x1="0" y1="0" x2="0" y2="1">
        <stop offset="0" stopColor="#20f520" />
        <stop offset=".7" stopColor="#26fe26" />
      </linearGradient>
    </defs>
    <g shapeRendering="crispEdges" fillRule="evenodd">
      <path d={ringPath} fill="url(#ring)" />
      <path d={rotorPath} fill="#f00" />
      <path d="M657 514v36" stroke="#0f0" strokeWidth="2" />
      <path d="M657 550h36" stroke="#f00" strokeWidth="2" />
    </g>
    <g fill="#f79a35" fontFamily="Liberation Sans, sans-serif" fontSize="9">
      <text x="658" y="510">YC</text>
      <text x="698" y="550">XC</text>
      <text x="657" y="550">ZC</text>
    </g>
  </Model>
);

const AxisTriad = () => (
  <Triad width="54" height="50" viewBox="82 886 54 50" aria-hidden="true">
    <path d="M91 898v27" stroke="#06ca80" strokeWidth="2" />
    <path d="M94 927h26" stroke="#f82a2a" strokeWidth="2" />
    <rect x="88" y="924" width="6" height="6" fill="#aaa" />
    <g fontFamily="Liberation Sans, sans-serif" fontSize="8">
      <text x="88" y="894" fill="#06b878">Y</text>
      <text x="126" y="930" fill="#f82a2a">X</text>
      <text x="89" y="930" fill="#1818f0">Z</text>
    </g>
  </Triad>
);

/* ---------- task bar drawings ---------- */

const WinOrb = () => (
  <Svg size={38} box={38}>
    <defs>
      <radialGradient id="orb" cx=".5" cy=".95" r=".8">
        <stop offset="0" stopColor="#20e0ff" />
        <stop offset=".45" stopColor="#1578b0" />
        <stop offset="1" stopColor="#4a6b88" />
      </radialGradient>
    </defs>
    <circle cx="19" cy="19" r="17.5" fill="url(#orb)" stroke="#0b3454" />
    <path d="M3 19C4-1 34-1 35 19c-8-6-24 4-32 0z" fill="#fff" opacity=".35" />
    <path d="M11 10c3-2 6-1 8 0l-2 8c-3-1-5-2-8 0z" fill="#f0703a" />
    <path d="M21 11c3 1 5 1 9-1l-2 8c-4 2-6 1-9 0z" fill="#96c94a" />
    <path d="M9 20c3-2 5-1 8 0l-2 8c-3-1-5-1-8 0z" fill="#5cb4ee" />
    <path d="M19 21c3 1 5 1 8 0l-2 8c-3 2-6 1-8 0z" fill="#fad04c" />
  </Svg>
);

const Petals = () => (
  <Svg size={32} box={32}>
    <path d="M14 2C7 0 1 4 1 10c0 4 3 6 7 6 3 0 4-1 6-3-4-3-4-8 0-11z" fill="#a6cc16" stroke="#5c9010" />
    <path d="M30 14c2-6-2-12-8-12-4 0-7 3-7 7 0 3 1 4 3 6 3-4 8-4 12-1z" fill="#4c98f0" stroke="#2060b8" />
    <path d="M18 30c6 2 13-1 13-8 0-4-3-6-7-6-3 0-4 1-6 3 4 3 4 8 0 11z" fill="#e85c50" stroke="#a83428" />
    <path d="M2 18c-2 6 1 13 8 13 4 0 7-3 7-7 0-3-1-4-3-6-3 4-8 4-12 0z" fill="#f4c420" stroke="#b88410" />
  </Svg>
);

const Palette = () => (
  <Svg size={32} box={32}>
    <path d="M2 15C5 5 25 4 28 14c1 6-3 9-6 11-4 6-8 6-10 3 0-5-3-4-7-5-4-1-4-6-3-8z" fill="#e3eef4" stroke="#9dbdd4" />
    <circle cx="6" cy="18" r="2.5" fill="#e85040" />
    <circle cx="11" cy="13" r="2.5" fill="#48b44c" />
    <circle cx="18" cy="10" r="3" fill="#f4ac28" />
    <circle cx="14" cy="20" r="2.5" fill="#3894c8" />
    <path d="M27 6L16 30" stroke="#e8802c" strokeWidth="2.5" />
    <path d="M24 1l8 3-4 5-5-2z" fill="#b58866" />
  </Svg>
);

const Calculator = () => (
  <Svg size={32} box={32}>
    <rect x="5" y="2" width="22" height="28" rx="1" fill="#eaf1f5" stroke="#8fb4d0" />
    <path d="M6 3h20v2H6z" fill="#f4a640" />
    <rect x="7" y="6" width="18" height="8" fill="#cfe2f0" stroke="#88a8c0" />
    <text x="18" y="13" fontSize="8" fontFamily="Liberation Mono, monospace" fill="#244">0</text>
    {[18, 21, 24, 27].map((y) => (
      <path key={y} d={`M7 ${y}h18`} stroke="#85a6c0" strokeWidth="2" strokeDasharray="3 1" />
    ))}
    <path d="M23 23h3v5h-3z" fill="#f4962c" />
  </Svg>
);

const Browser = () => (
  <Svg size={32} box={32}>
    <circle cx="16" cy="16" r="14" fill="#f4fbef" />
    <circle cx="16" cy="16" r="12.5" fill="#4aad26" />
    <path d="M24 17H9M23 16c0-8-13-8-13 0 0 7 9 9 13 4" stroke="#fff" strokeWidth="4" />
    <path d="M8 30C-1 31 6 9 22 3c6-3 8-1 8 1" stroke="#4fb91f" strokeWidth="2" />
  </Svg>
);

const Folder = () => (
  <Svg size={34} box={34}>
    <path d="M2 5h9l2 3h19v22H2z" fill="#e8c870" stroke="#b8984c" />
    <path d="M4 3h9v5H4zM13 5h9v4h-9zM21 7h8v4h-8z" fill="#fff6d0" />
    <path d="M5 4h3v2H5z" fill="#2c9a30" />
    <path d="M14 6h3v2h-3z" fill="#d84028" />
    <path d="M22 8h3v2h-3z" fill="#2890d8" />
    <path d="M2 11h30l-2 19H4z" fill="#f6df92" stroke="#d0ae5c" />
    <path d="M8 31V21h19v10" stroke="#8fcbe8" strokeWidth="5" />
    <path d="M8 31V21h19v10" stroke="#c4e9f6" strokeWidth="2" />
  </Svg>
);

const Scheduler = () => (
  <Svg size={34} box={34}>
    <path d="M9 12l21 3v17L9 28z" fill="#fff" stroke="#222" />
    <path d="M9 12l21 2v3L9 14z" fill="#40c8d0" stroke="#111" />
    <path d="M9 3l4-2 6 4-2 3-6-2z" fill="#207828" stroke="#000" />
    <path d="M4 12l5-3 5 3-5 4z" fill="#d8d020" stroke="#000" />
    <path d="M13 23l3-2 3 3-3 6-4-2z" fill="#c81824" stroke="#000" />
    <text x="17" y="27" fontSize="11" fontFamily="Liberation Sans, sans-serif" fill="#08088c" fontWeight="700">32</text>
  </Svg>
);

export default function App() {
  return (
    <Window>
      <GlobalStyle />
      <TitleBar>
        <Icon name="nx" />
        <Title>NX 7 - 建模 - [model1.prt （修改的） ]</Title>
        <Badge>34</Badge>
        <Brand>SIEMENS</Brand>
        <WindowButtons>
          <WindowButton aria-label="最小化"><Glyph kind="min" /></WindowButton>
          <WindowButton aria-label="还原"><Glyph kind="restore" /></WindowButton>
          <WindowButton $close aria-label="关闭"><Glyph kind="close" /></WindowButton>
        </WindowButtons>
      </TitleBar>

      <MenuBar>
        <Grip />
        <Icon name="part" />
        <MenuList>
          {menus.map(([label, key]) => (
            <PlainButton key={key}>
              <span>{label}(<u>{key}</u>)</span>
            </PlainButton>
          ))}
        </MenuList>
        <WindowButtons $mdi>
          <MdiButton aria-label="最小化文档"><Glyph kind="min" color="#666" /></MdiButton>
          <MdiButton aria-label="还原文档"><Glyph kind="restore" color="#666" /></MdiButton>
          <MdiButton aria-label="关闭文档"><Glyph kind="close" color="#555" /></MdiButton>
        </WindowButtons>
      </MenuBar>

      <Groups groups={mainGroups} />
      <Groups groups={featureGroups} />

      <SelectionBar>
        <FilterBox $width={143} $after={9}>
          <Filter aria-label="类型过滤器"><option>没有选择过滤器</option></Filter>
          <FilterArrow><Svg size={12} box={12}><path d="M1 3h10L6 9z" fill="#101828" /></Svg></FilterArrow>
        </FilterBox>
        <FilterBox $width={150} $after={3}>
          <Filter aria-label="选择范围"><option>整个装配</option></Filter>
          <FilterArrow><Svg size={12} box={12}><path d="M1 3h10L6 9z" fill="#101828" /></Svg></FilterArrow>
        </FilterBox>
        <Items list="chainGray | snap v back house undoPt tree | marquee v | glassCube" />
        <Spacer />
        <DropButton $low aria-label="选项"><Down /></DropButton>
      </SelectionBar>

      <StatusBar>
        <StatusCell $flex="47 1 0" />
        <StatusCell $flex="47 1 0" />
        <StatusCell $width={20} />
        <StatusCell $width={36} />
        <StatusCell $width={22} $last>
          <PlainButton aria-label="全屏"><Icon name="fullscreen" size={14} /></PlainButton>
        </StatusCell>
      </StatusBar>

      <CueRow>
        <Groove />
        <PageStrip>
          <PageButton aria-label="上一页">
            <Svg size={12} box={12}><path d="M9 2L3 6l6 4" stroke="#555" strokeWidth="2" /></Svg>
          </PageButton>
          <PageButton aria-label="下一页">
            <Svg size={12} box={12}><path d="M3 2l6 4-6 4" stroke="#555" strokeWidth="2" /></Svg>
          </PageButton>
        </PageStrip>
      </CueRow>

      <WorkArea>
        <ResourceBar>
          {resources.map(([name, space], i) => (
            <ResourceTab key={name} $active={i === 0} $space={space} aria-label={name}>
              <Icon name={name} />
            </ResourceTab>
          ))}
        </ResourceBar>
        <Viewport>
          <GearModel />
          <AxisTriad />
        </Viewport>
      </WorkArea>

      <TaskBar>
        <TaskLaunch $width={54} aria-label="开始菜单"><WinOrb /></TaskLaunch>
        <TaskLaunch $width={60} $after={4} aria-label="浏览器"><Petals /></TaskLaunch>
        <BandGrip />
        <TaskLaunch $width={76} aria-label="画图"><Palette /></TaskLaunch>
        <TaskLaunch $width={48} $after={10} aria-label="计算器"><Calculator /></TaskLaunch>
        <TaskButton $width={54} $after={7} $stack={1} aria-label="网页"><Browser /></TaskButton>
        <TaskButton $width={52} $after={10} $stack={2} aria-label="文件夹"><Folder /></TaskButton>
        <TaskButton $width={59} $after={3} $active aria-label="NX 7"><Icon name="nx" size={32} /></TaskButton>
        <TaskButton $width={55} $after={0} $stack={1} aria-label="日程"><Scheduler /></TaskButton>
        <Tray>
          <BandGrip />
          <TrayButton $width={32} aria-label="输入法">
            <Svg>
              <path d="M1 6h14v8H1z" fill="#ddd" stroke="#888" />
              <path d="M3 8h10M3 10h10M4 12h8" stroke="#555" strokeDasharray="1 1" />
              <path d="M5 5c1-4 5 0 9-4" stroke="#ccc" />
            </Svg>
          </TrayButton>
          <TrayButton $width={16} aria-label="帮助">
            <Svg>
              <circle cx="8" cy="7" r="6.5" fill="#1828b8" stroke="#b8b8c8" strokeWidth="1.5" />
              <path d="M5.5 5c0-3 5-3 5 0 0 1-2 1-2 3M8.500 9v2" stroke="#fff" strokeWidth="1.800" />
            </Svg>
          </TrayButton>
          <TrayButton $width={26} aria-label="语言栏">
            <Svg size={18} box={18}>
              <path d="M8 2V0h6v4h-2M5 3h6v4H5z" stroke="#fff" />
              <path d="M6 12h6l-3 3z" fill="#fff" />
            </Svg>
          </TrayButton>
          <TrayButton $width={12} aria-label="显示隐藏的图标">
            <Svg size={8} box={8}><path d="M0 6h8L4 2z" fill="#fff" /></Svg>
          </TrayButton>
          <TrayButton $width={32} aria-label="音量">
            <Svg>
              <path d="M1 5h3l4-4v14l-4-4H1z" fill="#ddd" stroke="#fff" />
              <path d="M10 6c1 1 1 3 0 4M12 4c2 2 2 6 0 8" stroke="#fff" />
              <path d="M14 2c2 3 2 9 0 12" stroke="#8fb0cc" />
            </Svg>
          </TrayButton>
          <Clock>8:49<br />2015-01-29</Clock>
          <ShowDesktop aria-label="显示桌面" />
        </Tray>
      </TaskBar>
    </Window>
  );
}
